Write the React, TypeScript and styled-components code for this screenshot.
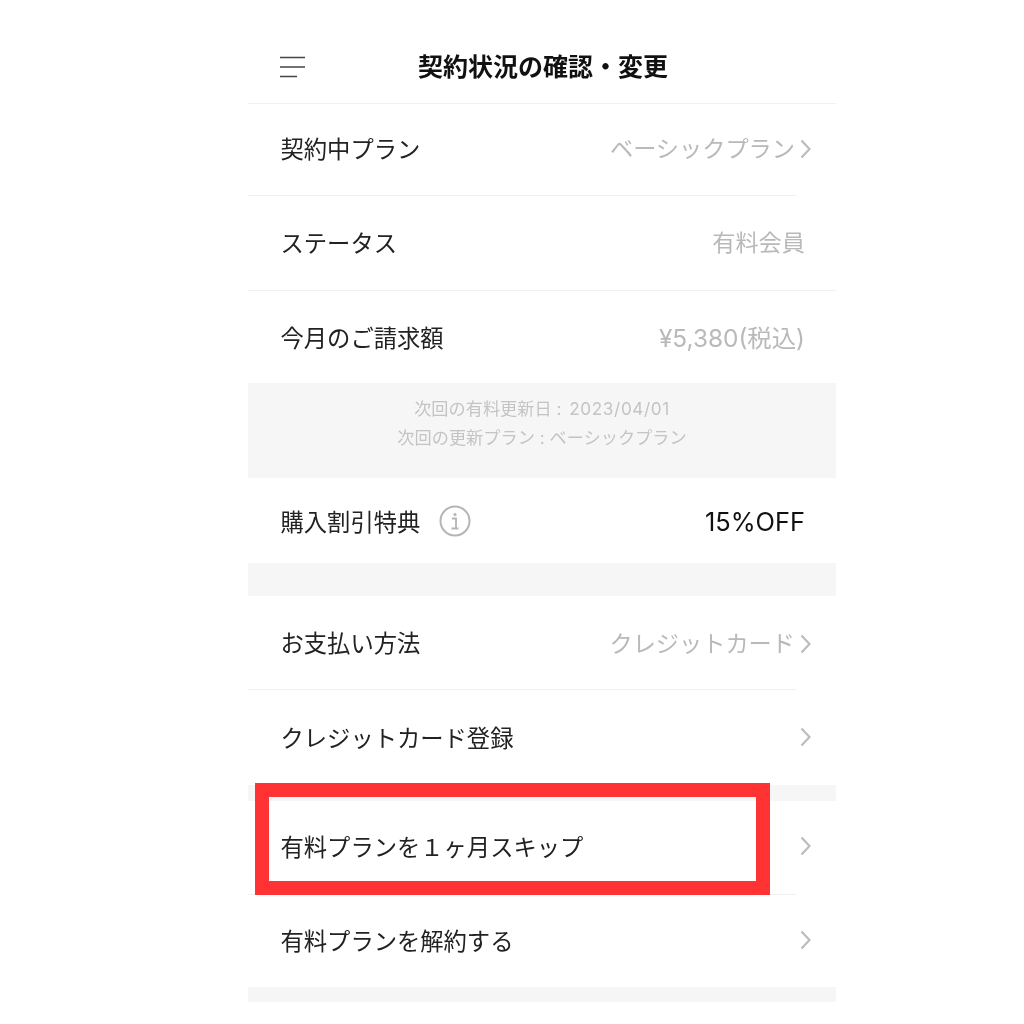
import React from 'react';
import styled, { createGlobalStyle } from 'styled-components';

const GlobalStyle = createGlobalStyle`
  html, body {
    margin: 0;
    padding: 0;
    background: #fff;
  }
  body {
    font-family: 'Noto Sans CJK JP', 'Noto Sans', sans-serif;
  }
`;

const Page = styled.div`
  width: 1024px;
  height: 1024px;
  overflow: hidden;
  padding-left: 248px;
  box-sizing: border-box;
  background: #fff;
`;
const Panel = styled.div`
  position: relative;
  width: 588px;
  display: flex;
  flex-direction: column;
  filter: blur(0.35px);
`;
const Header = styled.header`
  height: 103px;
  padding-top: 27px;
  box-sizing: border-box;
  display: flex;
  align-items: center;
  justify-content: center;
  position: relative;
`;
const MenuIcon = styled.svg`
  position: absolute;
  left: 32px;
  top: 56px;
  width: 26px;
  height: 22px;
`;
const Title = styled.h1`
  margin: 0;
  font-size: 25px;
  font-weight: 700;
  line-height: 30px;
  color: #111;
  transform: translateX(1px);
`;
const Divider = styled.div<{ $short?: boolean }>`
  height: 1px;
  width: ${({ $short }) => ($short ? '548px' : '100%')};
  background: #f1f1f1;
`;
const Row = styled.div<{ $height: number; $lift: number }>`
  height: ${({ $height }) => $height}px;
  padding: 0 25px ${({ $lift }) => $lift}px 32.5px;
  box-sizing: border-box;
  display: flex;
  align-items: center;
  justify-content: space-between;
`;
const Label = styled.div`
  display: flex;
  align-items: center;
  gap: 19px;
  font-size: 23.3px;
  line-height: 30px;
  color: #222;
`;
const Value = styled.div<{ $dark?: boolean; $inset?: boolean; $size?: number }>`
  display: flex;
  align-items: center;
  padding-top: 3px;
  font-family: Inter, 'Noto Sans CJK JP', sans-serif;
  font-size: ${({ $size }) => $size ?? 23.2}px;
  line-height: 30px;
  color: ${({ $dark }) => ($dark ? '#111' : '#b9b9b9')};
  padding-right: ${({ $inset }) => ($inset ? '7px' : '0')};
  margin-right: ${({ $inset }) => ($inset ? '-1px' : '0')};
`;
const Chevron = styled.svg`
  width: 11px;
  height: 20px;
  flex: none;
  margin-left: 5px;
`;
const Gap = styled.div<{ $height: number }>`
  height: ${({ $height }) => $height}px;
  background: #f6f6f6;
`;
const Note = styled.div`
  height: 95px;
  padding-top: 11px;
  box-sizing: border-box;
  background: #f6f6f6;
  text-align: center;
  font-family: Inter, 'Noto Sans CJK JP', sans-serif;
  font-size: 17.2px;
  line-height: 29px;
  color: #c4c4c4;
`;
const NoteDate = styled.span`
  margin-left: 3px;
  letter-spacing: 0.6px;
`;
const Highlight = styled.div`
  position: absolute;
  left: 7px;
  top: 783px;
  width: 515px;
  height: 112px;
  box-sizing: border-box;
  border: 14px solid #ff3333;
`;

const Arrow = () => (
  <Chevron viewBox="0 0 11 20" fill="none" stroke="#bcbcbc" strokeWidth="2.2">
    <path d="M1.5 1.5 L9.5 10 L1.5 18.5" />
  </Chevron>
);

const App: React.FC = () => {
  return (
    <Page>
      <GlobalStyle />
      <Panel>
        <Header>
          <MenuIcon viewBox="0 0 26 22" fill="none" stroke="#444" strokeWidth="1.7">
            <path d="M0 1.5 H25 M0 11 H25 M0 20.5 H17" />
          </MenuIcon>
          <Title>契約状況の確認・変更</Title>
        </Header>
        <Divider />
        <Row $height={91} $lift={4}>
          <Label>契約中プラン</Label>
          <Value>
            ベーシックプラン
            <Arrow />
          </Value>
        </Row>
        <Divider $short />
        <Row $height={94} $lift={3}>
          <Label>ステータス</Label>
          <Value $inset>有料会員</Value>
        </Row>
        <Divider />
        <Row $height={92} $lift={1}>
          <Label>今月のご請求額</Label>
          <Value $inset $size={24.4}>
            ¥5,380(税込)
          </Value>
        </Row>
        <Note>
          次回の有料更新日 : <NoteDate>2023/04/01</NoteDate>
          <br />
          次回の更新プラン : ベーシックプラン
        </Note>
        <Row $height={85} $lift={0}>
          <Label>
            購入割引特典
            <svg width="32" height="32" viewBox="0 0 32 32" fill="none">
              <circle cx="16" cy="16" r="14.5" stroke="#b5b5b5" strokeWidth="2" />
              <circle cx="16" cy="9.5" r="1.6" fill="#b5b5b5" />
              <path d="M13 13.5 H17 V23 M12.5 23.5 H19.5" stroke="#b5b5b5" strokeWidth="1.8" />
            </svg>
          </Label>
          <Value $dark $inset $size={25.4}>
            15%OFF
          </Value>
        </Row>
        <Gap $height={33} />
        <Row $height={93} $lift={1}>
          <Label>お支払い方法</Label>
          <Value>
            クレジットカード
            <Arrow />
          </Value>
        </Row>
        <Divider $short />
        <Row $height={95} $lift={2}>
          <Label>クレジットカード登録</Label>
          <Arrow />
        </Row>
        <Gap $height={16} />
        <Row $height={93} $lift={4}>
          <Label>有料プランを１ヶ月スキップ</Label>
          <Arrow />
        </Row>
        <Divider $short />
        <Row $height={92} $lift={3}>
          <Label>有料プランを解約する</Label>
          <Arrow />
        </Row>
        <Gap $height={15} />
        <Highlight />
      </Panel>
    </Page>
  );
};

export default App;
